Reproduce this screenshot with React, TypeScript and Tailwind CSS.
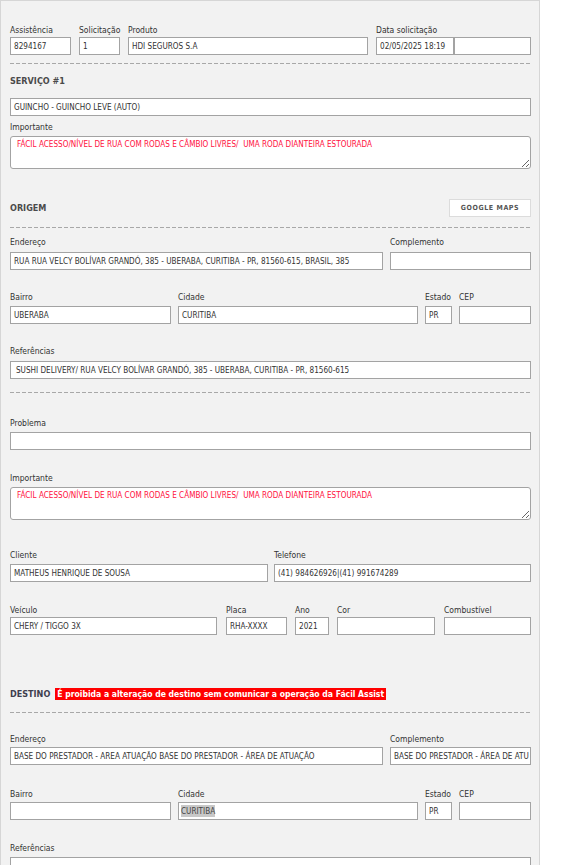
import React from "react";

const font = { fontFamily: '"DejaVu Sans Condensed", "DejaVu Sans", "Liberation Sans", sans-serif', fontStretch: "condensed" as const };

function Label({ children, mb = "mb-[3px]" }: { children: React.ReactNode; mb?: string }) {
  return <div className={`text-[8.5px] leading-[12px] text-[#333] whitespace-nowrap ${mb}`}>{children}</div>;
}

function Box({ value, pl = "pl-[3px]" }: { value?: React.ReactNode; pl?: string }) {
  return (
    <div className={`h-[18px] w-full bg-white border border-[#a3a3a3] flex items-center ${pl} pr-[2px] overflow-hidden whitespace-nowrap text-[8.1px] text-[#333]`}>
      {value}
    </div>
  );
}

function Field({ label, value, w, mb, pl }: { label: string; value?: React.ReactNode; w: string; mb?: string; pl?: string }) {
  return (
    <div className={`${w} shrink-0`}>
      <Label mb={mb}>{label}</Label>
      <Box value={value} pl={pl} />
    </div>
  );
}

function Dashed({ mt }: { mt: string }) {
  return <div className={`${mt} h-px w-full bg-[repeating-linear-gradient(to_right,#a8a8a8_0_4px,transparent_4px_6px)]`} />;
}

function Area({ text }: { text: string }) {
  return (
    <textarea
      readOnly
      defaultValue={text}
      className="block h-[33px] w-full bg-white border border-[#a3a3a3] rounded-[3px] pl-[6px] pt-[2px] text-[8.1px] leading-[11px] text-[#ff1040] outline-none"
      style={font}
    />
  );
}

const IMPORTANTE = "FÁCIL ACESSO/NÍVEL DE RUA COM RODAS E CÂMBIO LIVRES/  UMA RODA DIANTEIRA ESTOURADA";

export default function App() {
  return (
    <div className="min-h-[865px] bg-white" style={font}>
      <div className="w-[540px] min-h-[865px] bg-[#f2f2f2] border-t border-l border-r border-[#d6d6d6] pl-[9px] pr-[8px] pt-[23px] pb-4">
        {/* Row 1 */}
        <div className="flex">
          <Field label="Assistência" value="8294167" w="w-[61px]" mb="mb-px" />
          <div className="w-[8px] shrink-0" />
          <Field label="Solicitação" value="1" w="w-[41px]" mb="mb-px" />
          <div className="w-[8px] shrink-0" />
          <Field label="Produto" value="HDI SEGUROS S.A" w="w-[240px]" mb="mb-px" />
          <div className="w-[8px] shrink-0" />
          <div className="w-[155px] shrink-0">
            <Label mb="mb-px">Data solicitação</Label>
            <div className="flex">
              <div className="w-[78px]"><Box value="02/05/2025 18:19" /></div>
              <div className="w-[77px]"><Box /></div>
            </div>
          </div>
        </div>

        <Dashed mt="mt-[8px]" />

        <div className="mt-[11px] text-[9px] leading-[12px] font-bold text-[#4a4a4a]">SERVIÇO #1</div>
        <div className="mt-[11px]"><Box value="GUINCHO - GUINCHO LEVE (AUTO)" /></div>

        <div className="mt-[5px]">
          <Label>Importante</Label>
          <Area text={IMPORTANTE} />
        </div>

        <div className="mt-[30px] flex items-center justify-between h-[18px]">
          <div className="text-[9px] leading-[12px] font-bold text-[#4a4a4a]">ORIGEM</div>
          <div className="w-[82px] h-[18px] bg-white border border-[#dcdcdc] flex items-center justify-center text-[7px] font-bold tracking-[0.6px] text-[#555]">
            GOOGLE MAPS
          </div>
        </div>

        <Dashed mt="mt-[10px]" />

        <div className="mt-[8px] flex gap-[7px]">
          <Field label="Endereço" value="RUA RUA VELCY BOLÍVAR GRANDÓ, 385 - UBERABA, CURITIBA - PR, 81560-615, BRASIL, 385" w="w-[373px]" mb="mb-[4px]" />
          <Field label="Complemento" w="w-[141px]" mb="mb-[4px]" />
        </div>

        <div className="mt-[21px] flex gap-[7px]">
          <Field label="Bairro" value="UBERABA" w="w-[161px]" />
          <Field label="Cidade" value="CURITIBA" w="w-[240px]" />
          <Field label="Estado" value="PR" w="w-[27px]" />
          <Field label="CEP" w="w-[72px]" />
        </div>

        <div className="mt-[21px]">
          <Label mb="mb-[4px]">Referências</Label>
          <Box value="SUSHI DELIVERY/ RUA VELCY BOLÍVAR GRANDÓ, 385 - UBERABA, CURITIBA - PR, 81560-615" pl="pl-[5px]" />
        </div>

        <Dashed mt="mt-[13px]" />

        <div className="mt-[24px]">
          <Label>Problema</Label>
          <Box />
        </div>

        <div className="mt-[22px]">
          <Label>Importante</Label>
          <Area text={IMPORTANTE} />
        </div>

        <div className="mt-[29px] flex gap-[6px]">
          <Field label="Cliente" value="MATHEUS HENRIQUE DE SOUSA" w="w-[258px]" />
          <Field label="Telefone" value="(41) 984626926|(41) 991674289" w="w-[257px]" />
        </div>

        <div className="mt-[22px] flex">
          <Field label="Veículo" value="CHERY / TIGGO 3X" w="w-[207px]" mb="mb-px" />
          <div className="w-[9px] shrink-0" />
          <Field label="Placa" value="RHA-XXXX" w="w-[61px]" mb="mb-px" />
          <div className="w-[8px] shrink-0" />
          <Field label="Ano" value="2021" w="w-[34px]" mb="mb-px" />
          <div className="w-[8px] shrink-0" />
          <Field label="Cor" w="w-[98px]" mb="mb-px" />
          <div className="w-[9px] shrink-0" />
          <Field label="Combustível" w="w-[87px]" mb="mb-px" />
        </div>

        <div className="mt-[53px] flex items-center h-[12px]">
          <div className="text-[9px] leading-[12px] font-bold text-[#3e3e4e]">DESTINO</div>
          <div className="ml-[5px] h-[12px] bg-[#ff0000] px-[2px] flex items-center text-[8.55px] leading-[12px] font-bold text-white whitespace-nowrap">
            É proibida a alteração de destino sem comunicar a operação da Fácil Assist
          </div>
        </div>

        <Dashed mt="mt-[12px]" />

        <div className="mt-[20px] flex gap-[7px]">
          <Field label="Endereço" value="BASE DO PRESTADOR - AREA ATUAÇÃO BASE DO PRESTADOR - ÁREA DE ATUAÇÃO" w="w-[373px]" mb="mb-[2px]" />
          <Field label="Complemento" value="BASE DO PRESTADOR - ÁREA DE ATU" w="w-[141px]" mb="mb-[2px]" />
        </div>

        <div className="mt-[23px] flex gap-[7px]">
          <Field label="Bairro" w="w-[161px]" mb="mb-[2px]" />
          <Field label="Cidade" value={<span className="bg-[#c8c8c8] text-[#444]">CURITIBA</span>} w="w-[240px]" mb="mb-[2px]" pl="pl-[2px]" />
          <Field label="Estado" value="PR" w="w-[27px]" mb="mb-[2px]" />
          <Field label="CEP" w="w-[72px]" mb="mb-[2px]" />
        </div>

        <div className="mt-[22px]">
          <Label>Referências</Label>
          <Box />
        </div>
      </div>
    </div>
  );
}
